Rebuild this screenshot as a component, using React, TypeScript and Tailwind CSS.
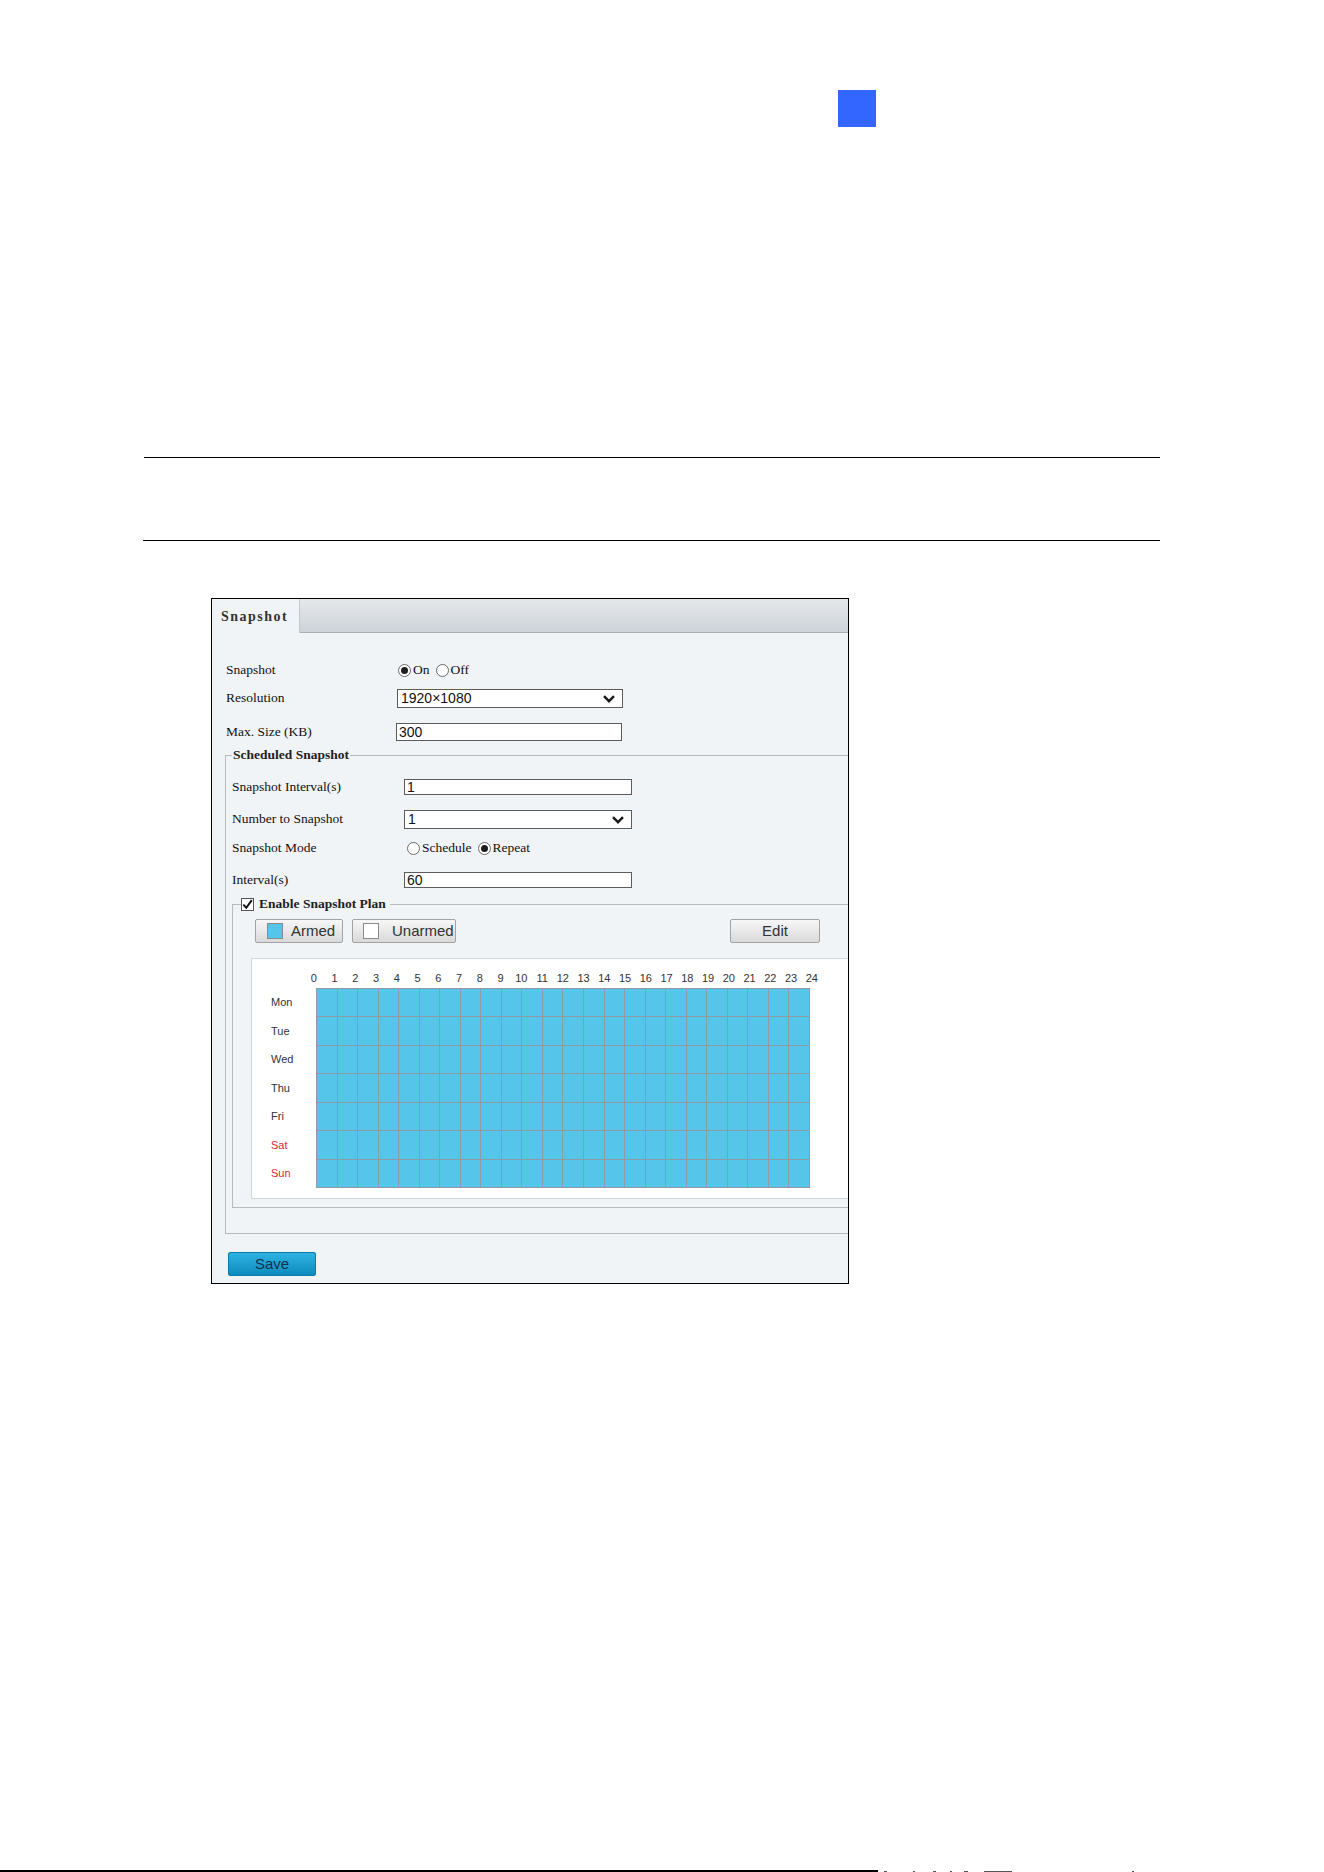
import React from 'react';

const serif = "font-['Liberation_Serif','Times_New_Roman',serif]";
const sans = "font-['Liberation_Sans',Arial,sans-serif]";

const HOURS = Array.from({ length: 25 }, (_, i) => i);
const DAYS = ['Mon', 'Tue', 'Wed', 'Thu', 'Fri', 'Sat', 'Sun'];

// specks of the running footer that peek above the page edge
const FOOTER_MARKS = [
  { w: 'w-[3px]', ml: 'ml-[6px]' },
  { w: 'w-[2px]', ml: 'ml-[26px]' },
  { w: 'w-[3px]', ml: 'ml-[18px]' },
  { w: 'w-[2px]', ml: 'ml-[14px]' },
  { w: 'w-[4px]', ml: 'ml-[12px]' },
  { w: 'w-[28px]', ml: 'ml-[16px]' },
  { w: 'w-[2px]', ml: 'ml-[120px]' },
];

const Radio: React.FC<{ checked?: boolean }> = ({ checked }) => (
  <span className="w-[13px] h-[13px] rounded-full border border-[#6a6a6a] bg-white flex items-center justify-center shrink-0">
    {checked && <span className="w-[7px] h-[7px] rounded-full bg-[#1e1e1e]" />}
  </span>
);

const Chevron: React.FC = () => (
  <svg width="12" height="8" viewBox="0 0 12 8" className="mr-[7px]">
    <polyline points="1,1.2 6,6.2 11,1.2" fill="none" stroke="#1a1a1a" strokeWidth="2.4" />
  </svg>
);

const TextBox: React.FC<{ value: string; w: string; h: string }> = ({ value, w, h }) => (
  <div className={`${w} ${h} border border-[#5c5c5c] bg-white flex items-center pl-[2px] text-[14px] text-[#111] ${sans}`}>
    {value}
  </div>
);

const SelectBox: React.FC<{ value: string; w: string }> = ({ value, w }) => (
  <div className={`${w} h-[19px] border border-[#5c5c5c] bg-white flex items-center justify-between pl-[3px] text-[14px] text-[#111] ${sans}`}>
    <span>{value}</span>
    <Chevron />
  </div>
);

const GrayButton: React.FC<{ className?: string; children: React.ReactNode }> = ({ className = '', children }) => (
  <div
    className={`h-[24px] rounded-[2px] border border-[#a3a3a3] bg-gradient-to-b from-[#f7f7f7] to-[#d9d9d9] flex items-center text-[15px] text-[#333] ${sans} ${className}`}
  >
    {children}
  </div>
);

const App: React.FC = () => {
  return (
    <div className="w-[1324px] h-[1872px] bg-white flex flex-col overflow-hidden">
      {/* chapter marker */}
      <div className="mt-[90px] ml-[838px] w-[38px] h-[37px] bg-[#3366ff]" />

      {/* rules around the note */}
      <div className="mt-[330px] ml-[144px] w-[1016px] h-px bg-black" />
      <div className="mt-[82px] ml-[143px] w-[1017px] h-px bg-black" />

      {/* Snapshot settings panel */}
      <div className="mt-[57px] ml-[211px] w-[638px] h-[686px] border border-black bg-[#f1f4f7] flex flex-col overflow-hidden shrink-0">
        <div className="h-[34px] flex shrink-0">
          <div className="w-[88px] h-full bg-[#f1f4f7] border-r border-[#c3c8cd] flex items-center pl-[9px]">
            <span className={`${serif} font-bold text-[14px] tracking-[1.5px] text-[#333]`}>Snapshot</span>
          </div>
          <div className="flex-1 h-full bg-gradient-to-b from-[#e5e8eb] to-[#cdd3d9] border-b border-[#a9afb5]" />
        </div>

        <div className={`${serif} text-[13.5px] text-[#111] flex flex-col`}>
          <div className="mt-[27px] h-[20px] flex items-center pl-[14px]">
            <span className="w-[171px]">Snapshot</span>
            <div className="flex items-center ml-[1px]">
              <Radio checked />
              <span className="ml-[2px]">On</span>
              <span className="ml-[6px]" />
              <Radio />
              <span className="ml-[2px]">Off</span>
            </div>
          </div>
          <div className="mt-[9px] h-[19px] flex items-center pl-[14px]">
            <span className="w-[171px]">Resolution</span>
            <SelectBox value="1920×1080" w="w-[226px]" />
          </div>
          <div className="mt-[15px] h-[18px] flex items-center pl-[14px]">
            <span className="w-[170px]">Max. Size (KB)</span>
            <TextBox value="300" w="w-[226px]" h="h-[18px]" />
          </div>

          {/* Scheduled Snapshot group */}
          <fieldset className="mt-[6px] ml-[13px] w-[640px] border border-[#b4babf] pb-[25px]">
            <legend className="ml-[6px] px-[1px] h-[16px] leading-[16px] font-bold text-[13.5px] text-[#222]">
              Scheduled Snapshot
            </legend>
            <div className="mt-[16px] h-[16px] flex items-center pl-[6px]">
              <span className="w-[172px]">Snapshot Interval(s)</span>
              <TextBox value="1" w="w-[228px]" h="h-[16px]" />
            </div>
            <div className="mt-[15px] h-[19px] flex items-center pl-[6px]">
              <span className="w-[172px]">Number to Snapshot</span>
              <SelectBox value="1" w="w-[228px]" />
            </div>
            <div className="mt-[11px] h-[16px] flex items-center pl-[6px]">
              <span className="w-[172px]">Snapshot Mode</span>
              <div className="flex items-center ml-[3px]">
                <Radio />
                <span className="ml-[2px]">Schedule</span>
                <span className="ml-[6px]" />
                <Radio checked />
                <span className="ml-[2px]">Repeat</span>
              </div>
            </div>
            <div className="mt-[16px] h-[16px] flex items-center pl-[6px]">
              <span className="w-[172px]">Interval(s)</span>
              <TextBox value="60" w="w-[228px]" h="h-[16px]" />
            </div>

            {/* Enable Snapshot Plan group */}
            <fieldset className="mt-[8px] ml-[6px] w-[630px] border border-[#b4babf]">
              <legend className="ml-[8px] pr-[4px] h-[16px] flex items-center">
                <span className="w-[13px] h-[13px] border border-[#555] bg-white flex items-center justify-center">
                  <svg width="11" height="11" viewBox="0 0 11 11">
                    <polyline points="1.3,5.6 4.3,8.8 9.8,1.2" fill="none" stroke="#111" strokeWidth="2" />
                  </svg>
                </span>
                <span className="ml-[5px] font-bold text-[13.5px] text-[#222]">Enable Snapshot Plan</span>
              </legend>

              <div className="mt-[7px] flex items-center">
                <GrayButton className="ml-[22px] w-[88px] pl-[11px]">
                  <span className="w-[16px] h-[16px] bg-[#55c6ea] border border-[#8a8a8a]" />
                  <span className="ml-[8px]">Armed</span>
                </GrayButton>
                <GrayButton className="ml-[9px] w-[104px] pl-[10px]">
                  <span className="w-[16px] h-[16px] bg-white border border-[#8a8a8a]" />
                  <span className="ml-[13px]">Unarmed</span>
                </GrayButton>
                <GrayButton className="ml-[274px] w-[90px] justify-center">Edit</GrayButton>
              </div>

              {/* weekly schedule */}
              <div className={`mt-[15px] mb-[8px] ml-[18px] w-[620px] h-[241px] border border-[#d2d6da] bg-white flex flex-col ${sans}`}>
                <div className="mt-[12px] h-[14px] flex items-center text-[11px] text-[#333]">
                  <span className="w-[51.5px] shrink-0" />
                  {HOURS.map((h) => (
                    <span key={h} className="w-[20.75px] shrink-0 text-center leading-none">
                      {h}
                    </span>
                  ))}
                </div>
                <div className="mt-[3px] flex">
                  <div className="w-[64px] flex flex-col">
                    {DAYS.map((d) => (
                      <span
                        key={d}
                        className={`h-[28.57px] pl-[19px] flex items-center text-[11px] ${
                          d === 'Sat' || d === 'Sun' ? 'text-[#e3262f]' : 'text-[#333]'
                        }`}
                      >
                        {d}
                      </span>
                    ))}
                  </div>
                  <div className="w-[494px] h-[200px] grid grid-cols-24 grid-rows-7 gap-px p-px bg-[#8f9ba4]">
                    {Array.from({ length: 24 * 7 }, (_, i) => (
                      <div key={i} className="bg-[#55c6ea]" />
                    ))}
                  </div>
                </div>
              </div>
            </fieldset>
          </fieldset>

          <div className="mt-[18px] ml-[16px] w-[88px] h-[24px] rounded-[2px] border border-[#0b7aa6] bg-gradient-to-b from-[#2db3e2] to-[#0b8bbd] flex items-center justify-center">
            <span className={`${sans} text-[15px] text-[#15304f]`}>Save</span>
          </div>
        </div>
      </div>

      {/* page footer rule */}
      <div className="mt-auto flex items-end h-[2px]">
        <div className="w-[878px] h-[2px] bg-black" />
        {FOOTER_MARKS.map((m, i) => (
          <div key={i} className={`${m.w} ${m.ml} h-px bg-[#555]`} />
        ))}
      </div>
    </div>
  );
};

export default App;
